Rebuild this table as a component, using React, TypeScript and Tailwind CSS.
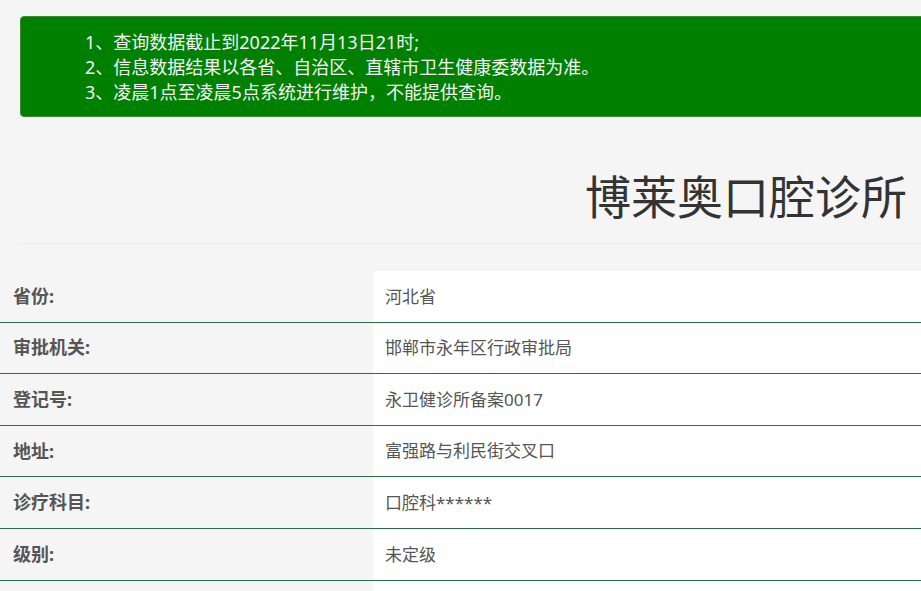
import React from "react";

const rows: [string, string][] = [
  ["省份:", "河北省"],
  ["审批机关:", "邯郸市永年区行政审批局"],
  ["登记号:", "永卫健诊所备案0017"],
  ["地址:", "富强路与利民街交叉口"],
  ["诊疗科目:", "口腔科******"],
  ["级别:", "未定级"],
  ["", ""],
];

export default function App() {
  return (
    <div
      className="w-[921px] h-[591px] overflow-hidden bg-[#f5f5f5]"
      style={{ fontFamily: '"Noto Sans", "Noto Sans CJK SC", sans-serif' }}
    >
      <div className="pt-[16px] pl-[20px]">
        <div className="mr-[-20px] h-[101px] rounded-[4px] border border-[#3a8a3a] bg-[#008000] pl-[64px] pt-[13px] text-[18px] leading-[25px] text-[#f4f4f4]">
          <div>1、查询数据截止到2022年11月13日21时;</div>
          <div>2、信息数据结果以各省、自治区、直辖市卫生健康委数据为准。</div>
          <div>3、凌晨1点至凌晨5点系统进行维护，不能提供查询。</div>
        </div>
      </div>
      <div className="flex h-[126px] items-center justify-end pr-[14px] pt-[32px]">
        <h1 className="text-[46px] font-normal leading-none text-[#333]">博莱奥口腔诊所</h1>
      </div>
      <div className="ml-[17px] h-px bg-[#ebebeb]" />
      <div className="mt-[27px]">
        {rows.map(([k, v], i) => (
          <div key={i} className="flex h-[51.6px] border-b border-[#2c6a4d]">
            <div className="flex w-[373px] items-center pl-[13px] text-[18px] font-bold text-[#555]">{k}</div>
            <div className="flex flex-1 items-center bg-white pl-[12px] text-[17px] text-[#555]">{v}</div>
          </div>
        ))}
      </div>
    </div>
  );
}
